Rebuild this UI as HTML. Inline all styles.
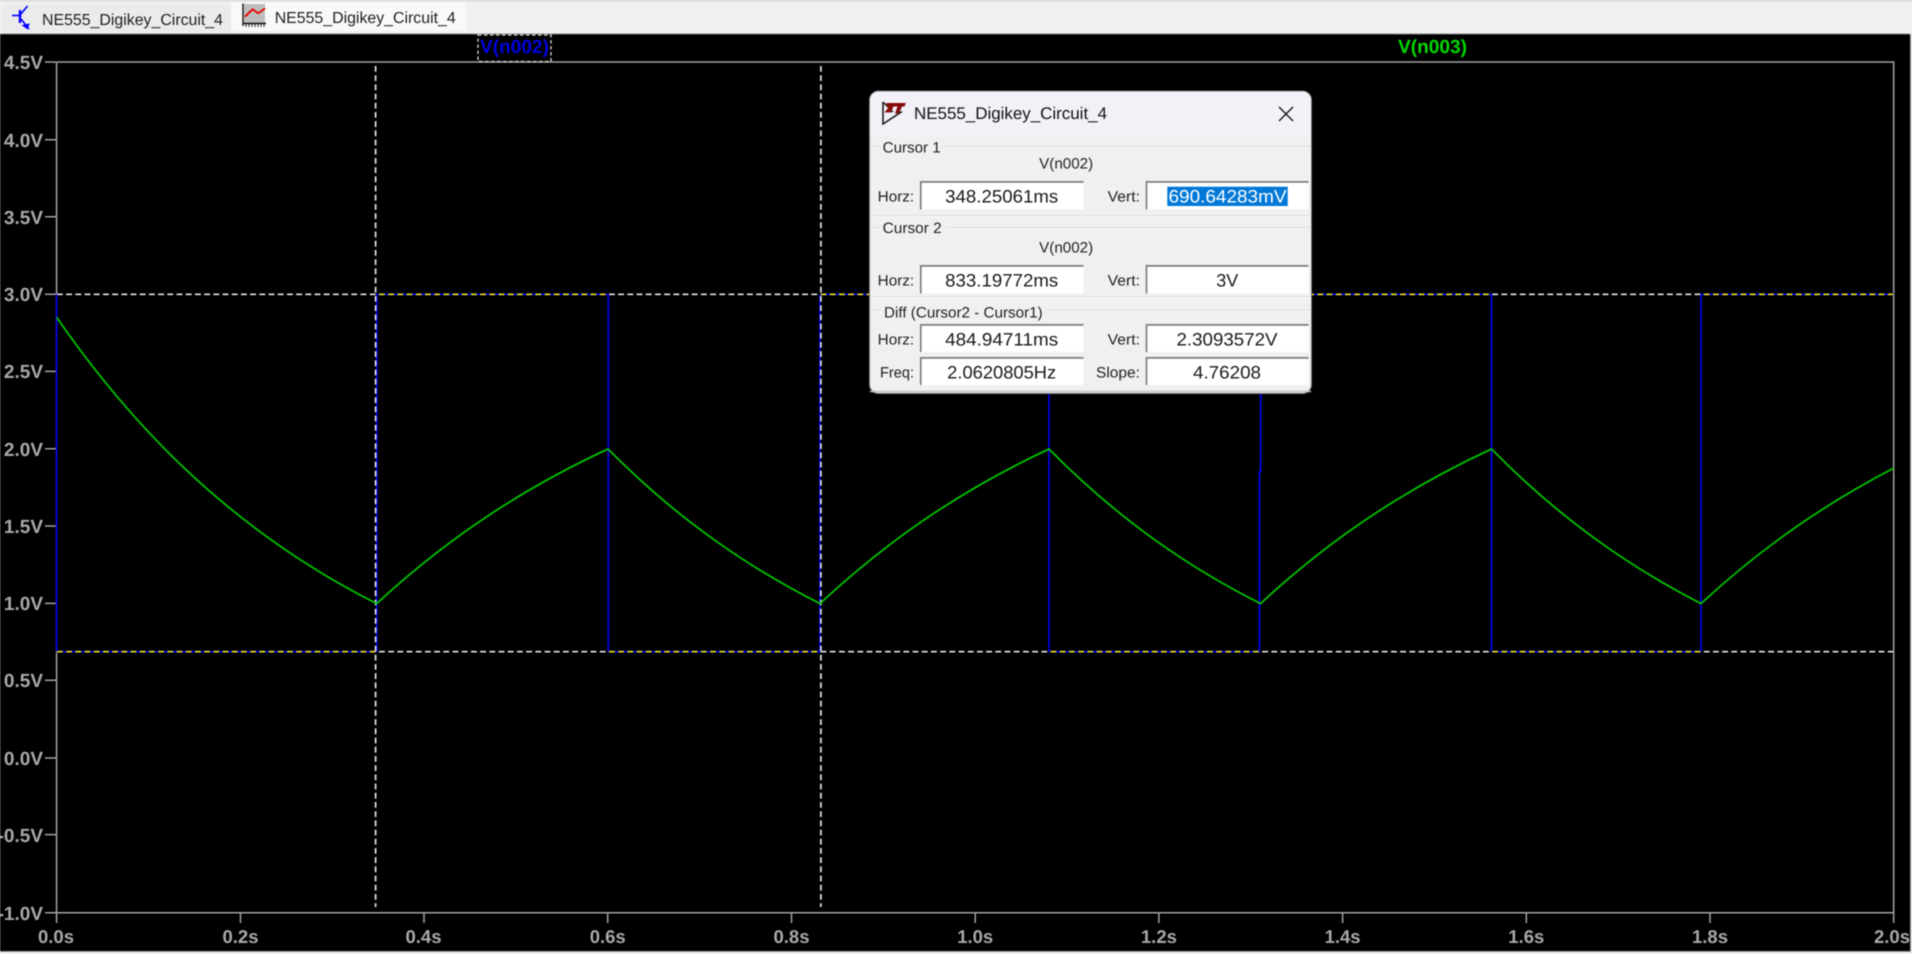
<!DOCTYPE html>
<html>
<head>
<meta charset="utf-8">
<title>NE555_Digikey_Circuit_4</title>
<style>
html,body{margin:0;padding:0;width:1912px;height:954px;overflow:hidden;background:#f0f0f0}
svg{display:block;filter:blur(0.45px)}
text{font-family:"Liberation Sans",Arial,sans-serif;text-rendering:geometricPrecision}
.ax{font-weight:bold;font-size:19px;fill:#a9a9a9}
.yl{text-anchor:end}
.xl{text-anchor:middle;font-size:18.5px}
.d{font-size:15px;fill:#222}
.v{font-size:18px;fill:#1a1a1a;text-anchor:middle}
.sep{stroke:#dcdcdc;stroke-width:1.2;fill:none}
.sw{stroke:#fbfbfb;stroke-width:1;fill:none}
.bx{fill:#fff;stroke:none}
.bd{fill:none;stroke:#7d7d7d;stroke-width:1.7}
</style>
</head>
<body>
<svg width="1912" height="954" viewBox="0 0 1912 954" xmlns="http://www.w3.org/2000/svg">
<defs>
<clipPath id="hi"><rect x="376.7" y="285" width="231.6" height="20"/><rect x="820" y="285" width="229" height="20"/><rect x="1260" y="285" width="231.5" height="20"/><rect x="1701" y="285" width="193" height="20"/></clipPath>
<clipPath id="lo"><rect x="56.5" y="642" width="320.2" height="20"/><rect x="608.3" y="642" width="211.7" height="20"/><rect x="1049" y="642" width="211" height="20"/><rect x="1491.5" y="642" width="209.5" height="20"/></clipPath>
</defs>

<!-- frame -->
<rect width="1912" height="954" fill="#f0f0f0"/>
<rect x="0" y="0" width="1912" height="1.5" fill="#d9d9d9"/>
<rect x="3" y="4" width="228" height="30" fill="#ebebeb"/>
<rect x="231" y="2" width="235" height="29" fill="#f9f9f9"/>
<rect x="0" y="34" width="1910" height="917" fill="#000"/>
<rect x="0" y="33.5" width="1910" height="1" fill="#808080"/>
<rect x="1910" y="34" width="1" height="918" fill="#9a9a9a"/>
<rect x="0" y="951" width="1911" height="1" fill="#9a9a9a"/>

<!-- tab icons -->
<g fill="none" stroke="#0000ff" stroke-width="1.6">
<path d="M20 10V23" stroke-width="2.4"/><path d="M12 15.5H20"/><path d="M21 14L27.5 6"/><path d="M21 19L29 29"/>
<path d="M23.5 25.5L28.5 24.5L27 28Z" fill="#0000ff"/>
</g>
<rect x="244" y="4" width="21" height="19" fill="#bdbdbd"/>
<path d="M243 3.5V26M243 23.5H266" stroke="#111" stroke-width="1.4" fill="none"/>
<path d="M246 24v3M249 24v3M252 24v3M255 24v3M258 24v3M261 24v3M264 24v3" stroke="#222" stroke-width="1" fill="none"/>
<path d="M245 16.7L252.5 9.3L258.3 13.3L265 8.3" stroke="#ee0000" stroke-width="1.8" fill="none"/>
<text x="42" y="25" font-size="16" fill="#222" textLength="181" lengthAdjust="spacingAndGlyphs">NE555_Digikey_Circuit_4</text>
<text x="274.7" y="23" font-size="16" fill="#222" textLength="181" lengthAdjust="spacingAndGlyphs">NE555_Digikey_Circuit_4</text>

<!-- axes -->
<g stroke="#a2a2a2" stroke-width="1.5" fill="none">
<path d="M56.6 62H1893.7V923"/>
<path d="M56.6 62V923"/>
<path d="M45 912.7H1893.7"/>
<path d="M45 62H56M45 139.8H56M45 216.7H56M45 294.2H56M45 371.4H56M45 448.7H56M45 526H56M45 603.4H56M45 680.2H56M45 758H56M45 834.6H56"/>
<path d="M240.5 913V923M424 913V923M607.7 913V923M791.5 913V923M975.2 913V923M1158.9 913V923M1342.6 913V923M1526.3 913V923M1710 913V923"/>
</g>
<text class="ax yl" x="43" y="69">4.5V</text>
<text class="ax yl" x="43" y="147">4.0V</text>
<text class="ax yl" x="43" y="224">3.5V</text>
<text class="ax yl" x="43" y="301">3.0V</text>
<text class="ax yl" x="43" y="378">2.5V</text>
<text class="ax yl" x="43" y="456">2.0V</text>
<text class="ax yl" x="43" y="533">1.5V</text>
<text class="ax yl" x="43" y="610">1.0V</text>
<text class="ax yl" x="43" y="687">0.5V</text>
<text class="ax yl" x="43" y="765">0.0V</text>
<text class="ax yl" x="43" y="842">-0.5V</text>
<text class="ax yl" x="43" y="920">-1.0V</text>
<text class="ax xl" x="56" y="943">0.0s</text>
<text class="ax xl" x="240.5" y="943">0.2s</text>
<text class="ax xl" x="423.5" y="943">0.4s</text>
<text class="ax xl" x="607.7" y="943">0.6s</text>
<text class="ax xl" x="791.5" y="943">0.8s</text>
<text class="ax xl" x="975.2" y="943">1.0s</text>
<text class="ax xl" x="1158.9" y="943">1.2s</text>
<text class="ax xl" x="1342.6" y="943">1.4s</text>
<text class="ax xl" x="1526.3" y="943">1.6s</text>
<text class="ax xl" x="1710" y="943">1.8s</text>
<text class="ax xl" x="1892" y="943">2.0s</text>

<!-- trace labels -->
<rect x="478" y="35" width="73" height="26.5" fill="none" stroke="#d8d8d8" stroke-width="1.3" stroke-dasharray="3.5 2.5"/>
<text x="480" y="53" font-size="19" font-weight="bold" fill="#0000e0" textLength="69" lengthAdjust="spacingAndGlyphs">V(n002)</text>
<text x="1398" y="53" font-size="19" font-weight="bold" fill="#00d800" textLength="69" lengthAdjust="spacingAndGlyphs">V(n003)</text>

<!-- cursors -->
<g stroke="#e6e6e6" stroke-width="1.7" fill="none" stroke-dasharray="5.8 3.4">
<path d="M57 294.3H1893"/>
<path d="M57 651.7H1893"/>
</g>

<!-- blue V(n002) -->
<g stroke="#0000e0" stroke-width="1.8" fill="none">
<path d="M56.6 294.3V651.7"/>
<path d="M376.8 294.3V651.7"/>
<path d="M608.3 294.3V651.7"/>
<path d="M820 294.3V651.7"/>
<path d="M1049 294.3V651.7"/>
<path d="M1260.7 294.3V471.7H1259.4V651.7"/>
<path d="M1491.5 294.3V651.7"/>
<path d="M1701 294.3V651.7"/>
<path d="M376.8 294.3H608.3M820 294.3H1049M1260 294.3H1491.5M1701 294.3H1893.7"/>
<path d="M56.6 651.7H376.8M608.3 651.7H820M1049 651.7H1260M1491.5 651.7H1701"/>
</g>
<g stroke="#e8e000" stroke-width="1.7" fill="none" stroke-dasharray="5.8 3.4">
<path d="M57 294.3H1893" clip-path="url(#hi)"/>
<path d="M57 651.7H1893" clip-path="url(#lo)"/>
</g>
<g stroke="#e6e6e6" stroke-width="1.7" fill="none" stroke-dasharray="5.8 3.4">
<path d="M375.6 66V907"/>
<path d="M820.9 66V907"/>
</g>

<!-- green V(n003) -->
<path fill="none" stroke="#00c000" stroke-width="1.8" stroke-linejoin="round" d="M56.6 317.2
C109.8 394.4 163.2 451.6 216.5 497.1
C269.8 542.6 323.2 576.6 376.7 603.6
C454 532.2 531 484.7 608 449
C678.7 520.4 749.3 567.9 820 603.6
C896.3 532.2 972.7 484.7 1049 449
C1119.3 520.4 1189.7 567.9 1260.5 603.6
C1337.5 532.2 1414.5 484.7 1491.5 449
C1561.5 520.4 1631.5 567.9 1701 603.6
C1765 544.2 1829 501.6 1893.7 468.2"/>

<!-- dialog -->
<rect x="869.5" y="91" width="442" height="302.5" rx="9" ry="9" fill="#f0f0f0" stroke="#777" stroke-width="1"/>
<path d="M870 137V100a8.5 8.5 0 0 1 8.5-8.5H1302.5a8.5 8.5 0 0 1 8.5 8.5V137Z" fill="#f3f0f7"/>
<path d="M870 391.5H1311" stroke="#c4c4c4" stroke-width="1.5"/>

<!-- LT logo -->
<path d="M883 102V124L902 111.5" stroke="#111" stroke-width="1.5" fill="none"/>
<path d="M883 102L893 112" stroke="#111" stroke-width="1.3" fill="none"/>
<path d="M886 103H895L891 112.5H884.5L888 108ZM894 103H906L904.5 106.5H902L899 113.5H895L897.5 106.5H893Z" fill="#860c0c"/>
<text x="914" y="119" font-size="16.9" fill="#111" textLength="193" lengthAdjust="spacingAndGlyphs">NE555_Digikey_Circuit_4</text>
<path d="M1279 107L1293 121M1293 107L1279 121" stroke="#111" stroke-width="1.3" fill="none"/>

<!-- group lines -->
<path class="sep" d="M870 146.7H880M945 146.7H1310"/>
<path class="sw" d="M870 147.8H880M945 147.8H1310"/>
<path class="sep" d="M870 215.7H1310M870 227.7H880M946 227.7H1310"/>
<path class="sw" d="M870 216.8H1310M870 228.8H880M946 228.8H1310"/>
<path class="sep" d="M870 296.7H1310M870 310.3H882M1047 310.3H1310"/>
<path class="sw" d="M870 297.8H1310M870 311.4H882M1047 311.4H1310"/>

<text class="d" x="882.7" y="152.5" textLength="58" lengthAdjust="spacingAndGlyphs">Cursor 1</text>
<text class="d" x="882.7" y="233" textLength="59" lengthAdjust="spacingAndGlyphs">Cursor 2</text>
<text class="d" x="884" y="317.3" textLength="158.7" lengthAdjust="spacingAndGlyphs">Diff (Cursor2 - Cursor1)</text>
<text class="d" x="1039.2" y="168.5" textLength="54" lengthAdjust="spacingAndGlyphs">V(n002)</text>
<text class="d" x="1039.2" y="252.5" textLength="54" lengthAdjust="spacingAndGlyphs">V(n002)</text>

<!-- row labels -->
<text class="d" x="877.7" y="201.7" textLength="36.5" lengthAdjust="spacingAndGlyphs">Horz:</text>
<text class="d" x="1107.7" y="201.7" textLength="32.3" lengthAdjust="spacingAndGlyphs">Vert:</text>
<text class="d" x="877.7" y="285.7" textLength="36.5" lengthAdjust="spacingAndGlyphs">Horz:</text>
<text class="d" x="1107.7" y="285.7" textLength="32.3" lengthAdjust="spacingAndGlyphs">Vert:</text>
<text class="d" x="877.7" y="344.5" textLength="36.5" lengthAdjust="spacingAndGlyphs">Horz:</text>
<text class="d" x="1107.7" y="344.5" textLength="32.3" lengthAdjust="spacingAndGlyphs">Vert:</text>
<text class="d" x="880" y="377.5" textLength="34" lengthAdjust="spacingAndGlyphs">Freq:</text>
<text class="d" x="1096" y="377.5" textLength="44" lengthAdjust="spacingAndGlyphs">Slope:</text>

<!-- inputs -->
<rect class="bx" x="920" y="181" width="163.5" height="28.5"/><path class="bd" d="M920.8 209.5V181.9H1083.5"/>
<rect class="bx" x="1145.7" y="181" width="162.8" height="28.5"/><path class="bd" d="M1146.5 209.5V181.9H1308.5"/>
<rect class="bx" x="920" y="265" width="163.5" height="28.5"/><path class="bd" d="M920.8 293.5V265.9H1083.5"/>
<rect class="bx" x="1145.7" y="265" width="162.8" height="28.5"/><path class="bd" d="M1146.5 293.5V265.9H1308.5"/>
<rect class="bx" x="920" y="324" width="163.5" height="28"/><path class="bd" d="M920.8 352V324.9H1083.5"/>
<rect class="bx" x="1145.7" y="324" width="162.8" height="28"/><path class="bd" d="M1146.5 352V324.9H1308.5"/>
<rect class="bx" x="920" y="357" width="163.5" height="28"/><path class="bd" d="M920.8 385V357.9H1083.5"/>
<rect class="bx" x="1145.7" y="357" width="162.8" height="28"/><path class="bd" d="M1146.5 385V357.9H1308.5"/>
<rect x="1167.3" y="186.7" width="120.4" height="19.3" fill="#0078d7"/>

<text class="v" x="1001.7" y="202.7" textLength="113" lengthAdjust="spacingAndGlyphs">348.25061ms</text>
<text class="v" x="1227.5" y="202.7" textLength="118" lengthAdjust="spacingAndGlyphs" style="fill:#fff">690.64283mV</text>
<text class="v" x="1001.7" y="286.7" textLength="113" lengthAdjust="spacingAndGlyphs">833.19772ms</text>
<text class="v" x="1227.3" y="286.7" textLength="22" lengthAdjust="spacingAndGlyphs">3V</text>
<text class="v" x="1001.7" y="345.3" textLength="113" lengthAdjust="spacingAndGlyphs">484.94711ms</text>
<text class="v" x="1227" y="345.3" textLength="101" lengthAdjust="spacingAndGlyphs">2.3093572V</text>
<text class="v" x="1001.7" y="378.3" textLength="109" lengthAdjust="spacingAndGlyphs">2.0620805Hz</text>
<text class="v" x="1227" y="378.3" textLength="68" lengthAdjust="spacingAndGlyphs">4.76208</text>
</svg>
</body>
</html>
